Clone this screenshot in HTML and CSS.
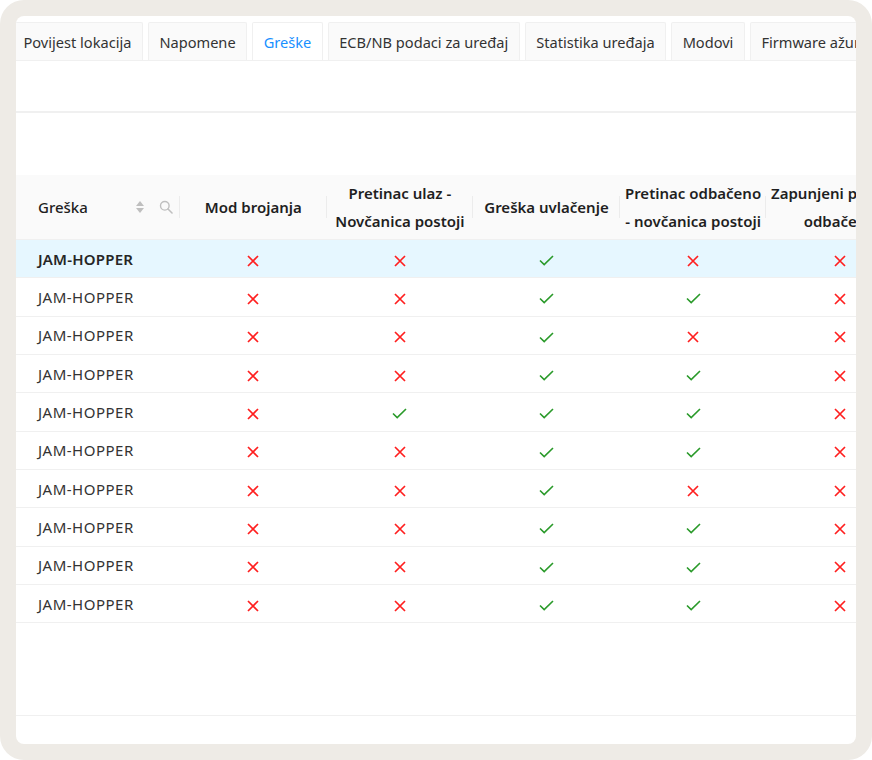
FILE: index.html
```html
<!DOCTYPE html>
<html lang="hr">

<head>
    <meta charset="UTF-8">
    <meta name="viewport" content="width=device-width, initial-scale=1.0">
    <title>Greške</title>
    <link rel="stylesheet" href="styles.css">
</head>

<body>
    <div class="frame">
        <div class="panel">
            <div class="tabs">
                <div class="tab">Povijest lokacija</div>
                <div class="tab">Napomene</div>
                <div class="tab active">Greške</div>
                <div class="tab">ECB/NB podaci za uređaj</div>
                <div class="tab">Statistika uređaja</div>
                <div class="tab">Modovi</div>
                <div class="tab">Firmware ažuriranja</div>
            </div>
            <div class="toolbar"></div>
            <div class="table-wrap">
                <table class="grid">
                    <colgroup>
                        <col class="col-first">
                        <col class="col-flag">
                        <col class="col-flag">
                        <col class="col-flag">
                        <col class="col-flag">
                        <col class="col-flag">
                    </colgroup>
                    <thead>
                        <tr>
                            <th class="th-first">
                                <div class="th-inner">
                                    <span>Greška</span>
                                    <span class="th-tools">
                                        <svg class="sorter" width="10" height="14" viewBox="0 0 10 14">
                                            <path d="M5 1 L9 6 H1 Z" fill="#bfbfbf"/>
                                            <path d="M5 13 L9 8 H1 Z" fill="#bfbfbf"/>
                                        </svg>
                                        <svg class="search" width="14" height="14" viewBox="0 0 14 14">
                                            <circle cx="5.8" cy="5.8" r="4.3" fill="none" stroke="#bfbfbf" stroke-width="1.4"/>
                                            <path d="M9 9 L13 13" stroke="#bfbfbf" stroke-width="1.6" stroke-linecap="round"/>
                                        </svg>
                                    </span>
                                </div>
                            </th>
                            <th>Mod brojanja</th>
                            <th>Pretinac ulaz -<br>Novčanica postoji</th>
                            <th>Greška uvlačenje</th>
                            <th>Pretinac odbačeno<br>- novčanica postoji</th>
                            <th>Zapunjeni pretinac<br>odbačeno</th>
                        </tr>
                    </thead>
                    <tbody id="rows"></tbody>
                </table>
            </div>
            <div class="spacer"></div>
            <div class="footer"></div>
        </div>
    </div>

    <script>
        // 0 = greška ne postoji, 1 = postoji
        const data = [
            [0, 0, 1, 0, 0],
            [0, 0, 1, 1, 0],
            [0, 0, 1, 0, 0],
            [0, 0, 1, 1, 0],
            [0, 1, 1, 1, 0],
            [0, 0, 1, 1, 0],
            [0, 0, 1, 0, 0],
            [0, 0, 1, 1, 0],
            [0, 0, 1, 1, 0],
            [0, 0, 1, 1, 0]
        ];

        const cross = '<svg width="12" height="12" viewBox="0 0 12 12"><path d="M1 1 L11 11 M11 1 L1 11" stroke="#ff1f1f" stroke-width="1.7" fill="none"/></svg>';
        const check = '<svg width="15" height="11" viewBox="0 0 15 11"><path d="M1 5.5 L5.2 9.6 L14 1" stroke="#2a9a2a" stroke-width="1.6" fill="none"/></svg>';

        const tbody = document.getElementById('rows');
        data.forEach((row, i) => {
            const tr = document.createElement('tr');
            if (i === 0) tr.className = 'selected';
            let html = '<td class="name">JAM-HOPPER</td>';
            row.forEach(v => {
                html += '<td class="flag">' + (v ? check : cross) + '</td>';
            });
            tr.innerHTML = html;
            tbody.appendChild(tr);
        });
    </script>
</body>

</html>
```

FILE: styles.css
```css
body {
    margin: 0;
    background-color: #ffffff;
    font-family: "Noto Sans", "Open Sans", sans-serif;
    color: #333;
}

.frame {
    width: 872px;
    height: 760px;
    box-sizing: border-box;
    padding: 16px;
    background-color: #eeebe6;
    border-radius: 24px;
}

.panel {
    height: 100%;
    background-color: #ffffff;
    border-radius: 8px;
    overflow: hidden;
    display: flex;
    flex-direction: column;
}

.tabs {
    display: flex;
    gap: 5px;
    margin-left: -4px;
    padding-top: 6px;
    border-bottom: 1px solid #f0f0f0;
    white-space: nowrap;
}

.tab {
    flex-shrink: 0;
    height: 37px;
    line-height: 38px;
    padding: 0 10.5px;
    font-size: 14.6px;
    color: #333;
    background-color: #fafafa;
    border: 1px solid #f0f0f0;
    border-bottom: none;
    border-radius: 2px 2px 0 0;
}

.tab.active {
    color: #1890ff;
    background-color: #ffffff;
}

.toolbar {
    height: 50px;
    border-bottom: 2px solid #f0f0f0;
    margin-bottom: 62px;
}

.table-wrap {
    overflow: hidden;
}

.grid {
    width: 897px;
    table-layout: fixed;
    border-collapse: collapse;
    font-size: 15px;
}

.col-first {
    width: 164px;
}

.col-flag {
    width: 146.6px;
}

.grid th {
    position: relative;
    height: 64px;
    padding: 0 4px;
    background-color: #fafafa;
    border-bottom: 1px solid #f0f0f0;
    color: #1f1f1f;
    font-weight: 600;
    line-height: 28px;
    text-align: center;
    white-space: nowrap;
    overflow: hidden;
}

.grid th::after {
    content: "";
    position: absolute;
    right: 0;
    top: 50%;
    width: 1px;
    height: 22px;
    margin-top: -11px;
    background-color: #ececec;
}

.grid th.th-first {
    padding-left: 22px;
    text-align: left;
}

.th-inner {
    display: flex;
    align-items: center;
    justify-content: space-between;
    padding-right: 3px;
}

.th-inner span:first-child {
    font-weight: 500;
}

.th-tools {
    display: flex;
    align-items: center;
    gap: 14px;
}

.grid td {
    height: 37.33px;
    padding: 0;
    border-bottom: 1px solid #f0f0f0;
}

.grid td.name {
    padding-left: 22px;
    color: #333;
    letter-spacing: 0.5px;
}

.grid td.flag {
    text-align: center;
}

.grid td.flag svg {
    vertical-align: middle;
}

.grid tr.selected td {
    background-color: #e6f7ff;
}

.grid tr.selected td.name {
    font-weight: 600;
    color: #262626;
    letter-spacing: 0.2px;
}

.spacer {
    flex-grow: 1;
}

.footer {
    height: 28px;
    border-top: 1px solid #f0f0f0;
}
```
